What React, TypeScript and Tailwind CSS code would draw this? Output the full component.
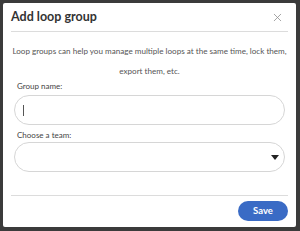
import { X } from "lucide-react"

const App = () => {
  return (
    <div className="w-[300px] h-[231px] bg-[#3b3b3b] pt-[3px] pl-[3px] font-['Lato',sans-serif]">
      <div className="w-[293px] h-[224px] bg-white rounded-[2px] px-2">
        <div className="h-[29px] flex items-center justify-between border-b border-[#dcdcdc]">
          <h2 className="text-[12.5px] font-bold text-[#333] leading-none">Add loop group</h2>
          <X className="w-[13px] h-[13px] text-[#8a8a8a] mr-[4px]" strokeWidth={1.4} />
        </div>
        <p className="mt-[9px] text-center text-[8.1px] leading-[20px] text-[#555]">
          Loop groups can help you manage multiple loops at the same time, lock them, export them, etc.
        </p>
        <div className="px-[3px]">
          <label className="block mt-[-1px] pl-[3px] text-[8px] leading-[12px] text-[#444]">Group name:</label>
          <div className="mt-[3px] h-[30px] rounded-full border border-[#d6d6d6] flex items-center pl-[8px]">
            <span className="w-px h-[11px] bg-[#555]" />
          </div>
          <label className="block mt-[4px] pl-[3px] text-[8px] leading-[12px] text-[#444]">Choose a team:</label>
          <div className="mt-[1px] h-[30px] rounded-full border border-[#d6d6d6] flex items-center justify-end pr-[5px]">
            <svg width="8" height="5" viewBox="0 0 8 5">
              <path d="M0 0 L8 0 L4 5 Z" fill="#222" />
            </svg>
          </div>
        </div>
        <div className="mt-[23px] border-t border-[#dcdcdc] pt-[5px] flex justify-end">
          <button className="w-[50px] h-[20px] rounded-full bg-[#3a6bc5] text-white text-[9.5px] font-bold">Save</button>
        </div>
      </div>
    </div>
  )
}

export default App
